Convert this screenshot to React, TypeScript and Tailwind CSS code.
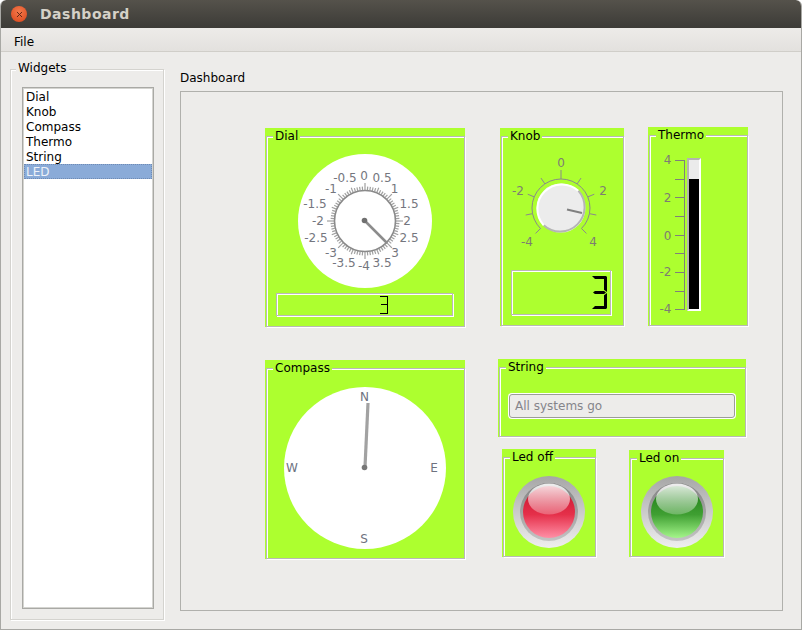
import type { ReactNode } from "react"
import { X } from "lucide-react"

const FONT = "font-['DejaVu_Sans',sans-serif]"

const dialLabels: [string, number, number][] = [
  ["0", 364, 176],
  ["0.5", 382, 178],
  ["1", 394.5, 188.5],
  ["1.5", 409, 204],
  ["2", 407, 221],
  ["2.5", 409, 238],
  ["3", 395, 252.5],
  ["3.5", 382, 263],
  ["-4", 364, 266],
  ["-3.5", 344, 263],
  ["-3", 331, 252.5],
  ["-2.5", 316, 238],
  ["-2", 318, 221],
  ["-1.5", 315, 204],
  ["-1", 331, 188.5],
  ["-0.5", 345, 178]
]

function polar(cx: number, cy: number, r: number, deg: number) {
  const a = (deg * Math.PI) / 180
  return { x: cx + r * Math.sin(a), y: cy - r * Math.cos(a) }
}

function Tick({ cx, cy, r1, r2, deg, color, width = 1 }: { cx: number; cy: number; r1: number; r2: number; deg: number; color: string; width?: number }) {
  const a = polar(cx, cy, r1, deg)
  const b = polar(cx, cy, r2, deg)
  return <line x1={a.x} y1={a.y} x2={b.x} y2={b.y} stroke={color} strokeWidth={width} />
}

function Group({ title, className, children }: { title: string; className: string; children?: ReactNode }) {
  return (
    <div className={`shrink-0 bg-[#adff2f] pt-2 ${className}`}>
      <div className="relative h-full border border-[#b9b9b6] ml-px shadow-[inset_0_1px_0_#fff,inset_1px_0_0_#fff,1px_1px_0_#fff]">
        <span className="absolute left-[6px] top-[-8px] bg-[#adff2f] px-[2px] text-[12px] leading-[15px] text-black">
          {title}
        </span>
        {children}
      </div>
    </div>
  )
}

function Dial() {
  const ticks = []
  for (let i = 0; i < 80; i++) {
    const deg = i * 4.5
    const major = i % 10 === 0
    const mid = i % 5 === 0
    ticks.push(
      <Tick key={i} cx={365} cy={221} r1={31} r2={major ? 38 : mid ? 36 : 34.5} deg={deg} color="#a0a0a0" width={1.2} />
    )
  }
  return (
    <svg className="block" width="134" height="134" viewBox="298 154 134 134">
      <circle cx="365" cy="221" r="67" fill="#fff" />
      {ticks}
      <circle cx="365" cy="221" r="30.5" fill="#fff" stroke="#8a8a8a" strokeWidth="1.6" />
      <line x1="365" y1="221" x2="387" y2="243" stroke="#8c8c8c" strokeWidth="2.5" />
      <circle cx="364.5" cy="220.5" r="2.8" fill="#707070" />
      {dialLabels.map(([t, x, y]) => (
        <text key={t} x={x} y={y} fontSize="12" fill="#74767e" textAnchor="middle" dominantBaseline="central">
          {t}
        </text>
      ))}
    </svg>
  )
}

function Knob() {
  const c = { x: 561, y: 208 }
  const angles = [-135, -101.25, -67.5, -33.75, 0, 33.75, 67.5, 101.25, 135]
  const s = polar(c.x, c.y, 29, -135)
  const e = polar(c.x, c.y, 29, 135)
  return (
    <svg className="block" width="102" height="100" viewBox="511 153 102 100">
      <path d={`M${s.x} ${s.y} A29 29 0 1 1 ${e.x} ${e.y}`} fill="none" stroke="#8a8a8a" strokeWidth="1" />
      {angles.map((a) => (
        <Tick key={a} cx={c.x} cy={c.y} r1={29} r2={a === 0 ? 38 : 36} deg={a} color="#8a8a8a" />
      ))}
      <circle cx={c.x} cy={c.y} r="26" fill="#adff2f" />
      <circle cx={c.x} cy={c.y} r="24.5" fill="#ececec" />
      <path d="M543.7 225.3 A24.5 24.5 0 0 0 578.3 190.7" fill="none" stroke="#b5b5b5" strokeWidth="2" />
      <path d="M543.7 225.3 A24.5 24.5 0 0 1 578.3 190.7" fill="none" stroke="#fff" strokeWidth="2" />
      <line x1="567" y1="209.5" x2="582" y2="213" stroke="#808080" strokeWidth="2" />
      {[
        ["0", 561, 163],
        ["-2", 518, 191],
        ["2", 603, 191],
        ["-4", 527, 242],
        ["4", 593, 242]
      ].map(([t, x, y]) => (
        <text key={t} x={x} y={y} fontSize="12" fill="#7d7d72" textAnchor="middle" dominantBaseline="central">
          {t}
        </text>
      ))}
    </svg>
  )
}

// seven segment "3", plain css shapes
function BigThree() {
  return (
    <div className="relative w-[15px] h-[33px]">
      <div className="absolute left-0 top-0 w-[15px] h-[3px] bg-black [clip-path:polygon(0_0,100%_0,80%_100%,20%_100%)]" />
      <div className="absolute right-0 top-px w-[3px] h-[15px] bg-black [clip-path:polygon(0_0,100%_0,100%_100%,0_85%)]" />
      <div className="absolute left-px top-[15px] w-[13px] h-[3px] bg-black [clip-path:polygon(15%_0,85%_0,100%_50%,85%_100%,15%_100%,0_50%)]" />
      <div className="absolute right-0 top-[17px] w-[3px] h-[15px] bg-black [clip-path:polygon(0_15%,100%_0,100%_100%,0_100%)]" />
      <div className="absolute left-0 bottom-0 w-[15px] h-[3px] bg-black [clip-path:polygon(20%_0,80%_0,100%_100%,0_100%)]" />
    </div>
  )
}

function SmallThree() {
  return (
    <div className="relative w-[8px] h-[18px] border-y border-r border-black">
      <div className="absolute left-px right-0 top-[7px] h-px bg-black" />
    </div>
  )
}

function ThermoScale() {
  const ticks = [160, 178.7, 197.4, 216, 234.7, 253.4, 272, 290.7, 309.4]
  const labels: [string, number][] = [["4", 160], ["2", 198], ["0", 235.5], ["-2", 272], ["-4", 309.4]]
  return (
    <svg className="block mt-[14px]" width="27" height="170" viewBox="659 150 27 170">
      <line x1="684.5" y1="160" x2="684.5" y2="310" stroke="#80807a" />
      {ticks.map((y) => (
        <line key={y} x1="675" y1={Math.round(y) + 0.5} x2="684" y2={Math.round(y) + 0.5} stroke="#80807a" />
      ))}
      {labels.map(([t, y]) => (
        <text key={t} x="671.5" y={y} fontSize="12" fill="#7d7d72" textAnchor="end" dominantBaseline="central">
          {t}
        </text>
      ))}
    </svg>
  )
}

function Led({ on }: { on: boolean }) {
  const id = on ? "on" : "off"
  return (
    <svg width="74" height="74" viewBox="-37 -37 74 74">
      <defs>
        <linearGradient id={`${id}-a`} x1="0" y1="0" x2="0" y2="1">
          <stop offset="0" stopColor="#a6a6a6" />
          <stop offset="1" stopColor="#efefef" />
        </linearGradient>
        <linearGradient id={`${id}-b`} x1="0" y1="0" x2="0" y2="1">
          <stop offset="0" stopColor="#808080" />
          <stop offset="1" stopColor="#c4c4c4" />
        </linearGradient>
        <linearGradient id={`${id}-c`} x1="0" y1="0" x2="0" y2="1">
          <stop offset="0" stopColor={on ? "#1c7a14" : "#c9102a"} />
          <stop offset="0.55" stopColor={on ? "#3f9f32" : "#e5304a"} />
          <stop offset="1" stopColor={on ? "#a4f58a" : "#ff8fa6"} />
        </linearGradient>
        <linearGradient id={`${id}-d`} x1="0" y1="0" x2="0" y2="1">
          <stop offset="0" stopColor="#fff" stopOpacity="0.88" />
          <stop offset="1" stopColor="#fff" stopOpacity="0.25" />
        </linearGradient>
      </defs>
      <circle r="36" fill={`url(#${id}-a)`} />
      <circle r="29" fill={`url(#${id}-b)`} />
      <circle r="26" fill={`url(#${id}-c)`} />
      <ellipse cx="0" cy="-13" rx="21" ry="15.5" fill={`url(#${id}-d)`} />
    </svg>
  )
}

const LCD = "border border-[#b9b9b6] shadow-[inset_1px_1px_0_#fff,1px_1px_0_#fff] flex items-center justify-end"

export default function App() {
  return (
    <div className={`w-[802px] h-[630px] overflow-hidden flex flex-col bg-[#edecea] border-x border-b border-[#a8a8a4] rounded-t-[6px] text-[12px] text-black ${FONT}`}>
      {/* Title bar */}
      <div className="h-[28px] shrink-0 flex items-center gap-[13px] pl-[11px] bg-linear-to-b from-[#55524b] to-[#3c3b37] -mx-px rounded-t-[6px]">
        <div className="w-4 h-4 rounded-full bg-[radial-gradient(circle_at_50%_35%,#f47a4c,#d9451a)] flex items-center justify-center">
          <X size={9} strokeWidth={2.5} className="text-[#5b2413]" />
        </div>
        <span className="text-[14px] font-bold text-[#d5d1c7] tracking-[0.5px]">Dashboard</span>
      </div>

      {/* Menu */}
      <div className="h-[24px] shrink-0 flex items-center pt-[5px] px-[13px] bg-linear-to-b from-[#edebe9] to-[#e3e1de] border-b border-[#d0cec9]">
        File
      </div>

      <div className="flex-1 flex pl-[9px]">
        {/* Widgets */}
        <div className="relative w-[154px] h-[551px] mt-[17px] border border-[#d4d3cf] shadow-[inset_1px_1px_0_#fff,1px_1px_0_#fff] pl-[11px] pr-[9px] pt-[17px]">
          <span className="absolute left-[5px] top-[-9px] bg-[#edecea] px-[2px] leading-[15px]">Widgets</span>
          <ul className="h-[522px] border border-[#a9a9a5] shadow-[inset_0_0_0_1px_#d4d4d0] bg-white pt-px pl-px pr-px">
            {["Dial", "Knob", "Compass", "Thermo", "String"].map((t) => (
              <li key={t} className="h-[15px] leading-[17px] pl-[2px]">{t}</li>
            ))}
            <li className="h-[15px] leading-[17px] pl-[2px] bg-[#8aabd8] text-[#eef2f8] outline-1 outline-dotted -outline-offset-1 outline-[#6f8bb3]">LED</li>
          </ul>
        </div>

        {/* Dashboard */}
        <div className="ml-[16px] w-[603px] flex flex-col">
          <div className="h-[39px] pt-[19px] leading-[15px]">Dashboard</div>
          <div className="h-[520px] border border-[#b0b0ac] flex items-start pl-[84px]">
            {/* left column */}
            <div className="w-[200px] pt-[36px] flex flex-col gap-[33px]">
              <Group title="Dial" className="w-[200px] h-[199px]">
                <div className="flex flex-col items-start pl-[9px]">
                  <div className="pl-[22px] pt-[17px]">
                    <Dial />
                  </div>
                  <div className={`${LCD} mt-[5px] w-[177px] h-[23px] pr-[64px]`}>
                    <SmallThree />
                  </div>
                </div>
              </Group>

              <Group title="Compass" className="w-[200px] h-[199px]">
                <div className="pl-[17px] pt-[18px]">
                  <svg className="block" width="162" height="162" viewBox="284 387 162 162">
                    <circle cx="365" cy="468" r="81" fill="#fff" />
                    <line x1="365" y1="467" x2="368" y2="403" stroke="#a2a2a2" strokeWidth="3.2" />
                    <circle cx="364.5" cy="467.5" r="2.8" fill="#777" />
                    {[
                      ["N", 364.5, 397],
                      ["E", 434, 467.5],
                      ["S", 364, 539],
                      ["W", 292, 467.5]
                    ].map(([t, x, y]) => (
                      <text key={t} x={x} y={y} fontSize="12" fill="#6e7280" textAnchor="middle" dominantBaseline="central">
                        {t}
                      </text>
                    ))}
                  </svg>
                </div>
              </Group>
            </div>

            {/* right column */}
            <div className="ml-[33px] pt-[35px] flex flex-col">
              <div className="flex items-start">
                <Group title="Knob" className="ml-[2px] mt-px w-[124px] h-[198px]">
                  <div className="flex flex-col items-start pl-[9px] pt-[16px]">
                    <Knob />
                    <div className={`${LCD} mt-[17px] w-[100px] h-[45px] pr-[3px]`}>
                      <BigThree />
                    </div>
                  </div>
                </Group>

                <Group title="Thermo" className="ml-[24px] w-[100px] h-[199px]">
                  <div className="flex items-start pl-[9px]">
                    <ThermoScale />
                    <div className="ml-px mt-[22px] w-[14px] h-[153px] border-t-2 border-l-2 border-[#b4b4b0] border-r-2 border-r-white border-b-2 border-b-white bg-[#ebebeb] pt-[19px]">
                      <div className="h-full bg-black" />
                    </div>
                  </div>
                </Group>
              </div>

              <Group title="String" className="mt-[33px] w-[248px] h-[78px]">
                <div className="pl-[9px] pt-[26px]">
                  <div className="w-[226px] h-[24px] rounded-[3px] border border-[#9c9c98] bg-[#edecea] shadow-[0_0_0_1px_#fff] flex items-center pl-[5px] text-[#85858a]">
                    All systems go
                  </div>
                </div>
              </Group>

              <div className="flex items-start mt-[12px]">
                <Group title="Led off" className="ml-[4px] w-[94px] h-[108px]">
                  <div className="h-full flex items-center justify-center pt-[9px] pr-px">
                    <Led on={false} />
                  </div>
                </Group>

                <Group title="Led on" className="ml-[33px] mt-px w-[95px] h-[107px]">
                  <div className="h-full flex items-center justify-center pt-[8px]">
                    <Led on />
                  </div>
                </Group>
              </div>
            </div>
          </div>
        </div>
      </div>
    </div>
  )
}
